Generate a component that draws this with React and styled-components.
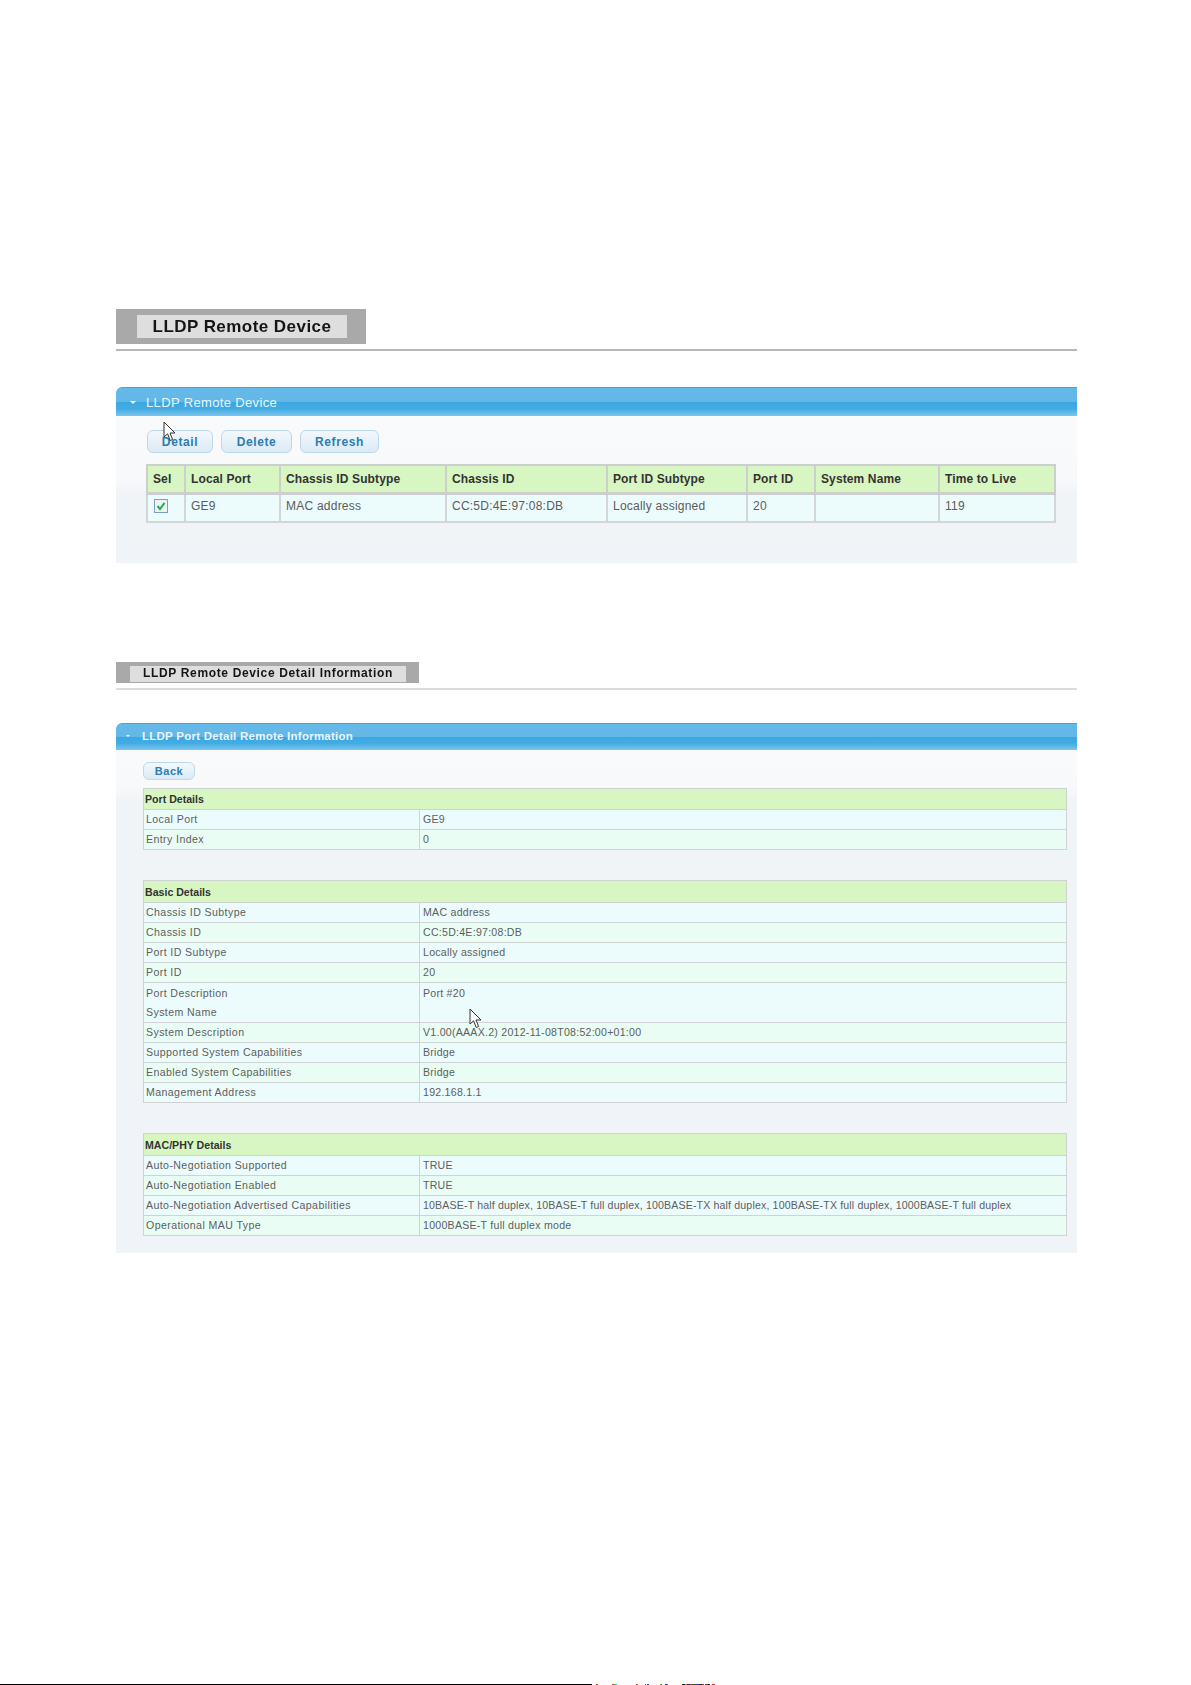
import React from "react";
import styled, { createGlobalStyle } from "styled-components";

const Global = createGlobalStyle`
  html, body { margin: 0; padding: 0; background: #fff; }
  body { font-family: "Liberation Sans", Arial, sans-serif; }
`;

const Page = styled.div`
  width: 1191px;
  height: 1685px;
  box-sizing: border-box;
  padding-top: 309px;
  display: flex;
  flex-direction: column;
  overflow: hidden;
`;
const Content = styled.main`
  width: 961px;
  margin-left: 116px;
  filter: blur(0.45px);
`;
const Banner = styled.div`
  box-sizing: border-box;
  width: ${(p) => p.$w}px;
  height: ${(p) => p.$h}px;
  padding: ${(p) => p.$pt}px ${(p) => p.$pr}px ${(p) => p.$pb}px ${(p) => p.$pl}px;
  margin-top: ${(p) => p.$mt || 0}px;
  background: #a9a9a9;
`;
const BannerInner = styled.h1`
  box-sizing: border-box;
  margin: 0;
  height: 100%;
  padding-bottom: ${(p) => p.$lift || 0}px;
  background: #dedede;
  display: flex;
  align-items: center;
  justify-content: center;
  font-size: ${(p) => p.$size}px;
  letter-spacing: ${(p) => p.$ls}px;
  font-weight: 700;
  color: #151515;
  white-space: nowrap;
`;
const Rule = styled.hr`
  margin: ${(p) => p.$mt}px 0 0;
  border: 0;
  height: ${(p) => p.$h}px;
  background: ${(p) => p.$c};
`;
const Panel = styled.section`
  position: relative;
  margin-top: ${(p) => p.$mt}px;
  height: ${(p) => p.$h}px;
  border-radius: 6px 0 0 0;
  overflow: hidden;
  display: flex;
  flex-direction: column;
`;
const PanelHead = styled.header`
  flex: none;
  box-sizing: border-box;
  height: ${(p) => p.$h}px;
  padding-left: ${(p) => p.$pl}px;
  padding-bottom: ${(p) => p.$lift || 0}px;
  display: flex;
  align-items: center;
  gap: ${(p) => p.$gap}px;
  color: #e9f5fc;
  font-size: ${(p) => p.$size}px;
  letter-spacing: ${(p) => p.$ls}px;
  font-weight: ${(p) => p.$weight};
  border-top: 1px solid #3fa6e2;
  background: linear-gradient(#64b9e9 0, #63b8e8 48%, #3aa7e1 52%, #45ace3 75%, #7ac6ee 100%);
`;
const Caret = styled.span`
  flex: none;
  width: 0;
  height: 0;
  border-left: ${(p) => p.$s}px solid transparent;
  border-right: ${(p) => p.$s}px solid transparent;
  border-top: ${(p) => p.$s - 0.5}px solid #f2f9fd;
`;
const PanelBody = styled.div`
  flex: 1;
  box-sizing: border-box;
  padding: ${(p) => p.$pt}px 0 0 ${(p) => p.$pl}px;
  background: linear-gradient(#f9fafc 0, #f8f9fb ${(p) => p.$fade}px, #f1f4f7 ${(p) => p.$fade + 14}px, #f0f3f7 100%);
`;
const ButtonRow = styled.div`
  display: flex;
  gap: 8px;
  height: ${(p) => p.$h}px;
`;
const Button = styled.button`
  box-sizing: border-box;
  width: ${(p) => p.$w}px;
  height: 100%;
  padding: 0;
  margin-left: ${(p) => p.$ml || 0}px;
  border: 1px solid #bcd8ec;
  border-radius: 6px;
  background: linear-gradient(#f3f8fc, #dbeaf6);
  color: #2b7eb0;
  font-family: inherit;
  font-weight: 700;
  font-size: ${(p) => p.$size}px;
  letter-spacing: 0.6px;
`;
const RemoteTable = styled.table`
  margin-top: 11px;
  width: 908px;
  table-layout: fixed;
  border-collapse: collapse;
  font-size: 12px;
`;
const HeadCell = styled.th`
  height: 26px;
  padding: 0 0 0 5px;
  text-align: left;
  background: #d7f6c2;
  color: #333;
  font-weight: 700;
  letter-spacing: 0.12px;
  border: 2px solid #cdcfcf;
  border-bottom-width: 3px;
`;
const BodyCell = styled.td`
  height: 28px;
  padding: 0 0 4px 5px;
  box-sizing: border-box;
  background: #ecfbfc;
  color: #5c5c5c;
  letter-spacing: 0.23px;
  border: 2px solid #d3d6d6;
`;
const Check = styled.span`
  display: flex;
  align-items: center;
  justify-content: center;
  box-sizing: border-box;
  width: 14px;
  height: 14px;
  margin-left: 1px;
  border: 1.5px solid #7f9fc0;
  background: #eef4f6;
`;
const DetailTable = styled.table`
  margin-top: ${(p) => p.$mt}px;
  width: 923px;
  table-layout: fixed;
  border-collapse: collapse;
  font-size: 10.6px;
`;
const SectionCell = styled.th`
  height: ${(p) => p.$h}px;
  padding: 0 0 0 1px;
  text-align: left;
  background: #d7f6c2;
  color: #333;
  font-weight: 700;
  letter-spacing: 0;
  border: 1.5px solid #cfd2d2;
`;
const DetailCell = styled.td`
  height: ${(p) => (p.$tall ? 39 : 19)}px;
  padding: 0 0 0 ${(p) => p.$pl}px;
  line-height: 19px;
  letter-spacing: ${(p) => p.$ls}px;
  background: ${(p) => (p.$odd ? "#e9fdf4" : "#ecfbfc")};
  color: #5e5e5e;
  border: 1.5px solid #d0d3d3;
  white-space: nowrap;
`;
const Cursor = styled.svg`
  position: absolute;
  left: ${(p) => p.$x}px;
  top: ${(p) => p.$y}px;
`;
const Footer = styled.footer`
  margin-top: auto;
  display: flex;
  height: 1px;
`;
const FooterLine = styled.div`
  width: 592px;
  height: 1px;
  background: #000;
`;
const FooterSpecks = styled.svg`
  display: block;
`;

const Arrow = ({ x, y, w = 13, h = 21 }) => (
  <Cursor $x={x} $y={y} width={w} height={h} viewBox="0 0 13 21">
    <path d="M1 1 L1 16 L4.6 12.8 L7.2 19.5 L9.6 18.5 L7 12 L12 12 Z" fill="#fff" stroke="#333" strokeWidth="1" strokeLinejoin="round" />
  </Cursor>
);

const columns = [
  ["Sel", 38], ["Local Port", 95], ["Chassis ID Subtype", 166], ["Chassis ID", 161],
  ["Port ID Subtype", 140], ["Port ID", 68], ["System Name", 124], ["Time to Live", 116],
];
const remote = ["GE9", "MAC address", "CC:5D:4E:97:08:DB", "Locally assigned", "20", "", "119"];

const sections = [
  { title: "Port Details", mt: 8, head: 20, rows: [["Local Port", "GE9"], ["Entry Index", "0"]] },
  {
    title: "Basic Details", mt: 30, head: 21, rows: [
      ["Chassis ID Subtype", "MAC address"],
      ["Chassis ID", "CC:5D:4E:97:08:DB"],
      ["Port ID Subtype", "Locally assigned"],
      ["Port ID", "20"],
      ["Port Description", "Port #20", "System Name"],
      ["System Description", "V1.00(AAAX.2) 2012-11-08T08:52:00+01:00"],
      ["Supported System Capabilities", "Bridge"],
      ["Enabled System Capabilities", "Bridge"],
      ["Management Address", "192.168.1.1"],
    ],
  },
  {
    title: "MAC/PHY Details", mt: 30, head: 21, rows: [
      ["Auto-Negotiation Supported", "TRUE"],
      ["Auto-Negotiation Enabled", "TRUE"],
      ["Auto-Negotiation Advertised Capabilities", "10BASE-T half duplex, 10BASE-T full duplex, 100BASE-TX half duplex, 100BASE-TX full duplex, 1000BASE-T full duplex"],
      ["Operational MAU Type", "1000BASE-T full duplex mode"],
    ],
  },
];

const specks = [
  [4, 1, "#c33"], [5, 1, "#39c"], [20, 2, "#d33"], [22, 1, "#3c3"], [23, 2, "#3cc"],
  [44, 1, "#c33"], [45, 1, "#3c9"], [53, 1, "#c33"], [55, 2, "#33c"], [68, 1, "#3c3"], [69, 1, "#c33"],
  [73, 2, "#33c"], [75, 1, "#c33"], [90, 3, "#222"], [93, 2, "#c83"], [95, 3, "#226"], [98, 2, "#c33"],
  [100, 3, "#262"], [103, 4, "#33c"], [107, 3, "#222"], [110, 2, "#c33"], [113, 3, "#262"], [116, 2, "#222"], [120, 3, "#c33"],
];

export default function App() {
  return (
    <Page>
      <Global />
      <Content>
        <Banner $w={250} $h={35} $pt={6} $pb={6} $pl={21} $pr={19}>
          <BannerInner $size={17} $ls={0.45}>LLDP Remote Device</BannerInner>
        </Banner>
        <Rule $mt={5} $h={2} $c="#b8b8b8" />
        <Panel $mt={36} $h={176}>
          <PanelHead $h={29} $pl={14} $gap={10} $size={13} $ls={0.35} $weight={400}>
            <Caret $s={3.5} />
            LLDP Remote Device
          </PanelHead>
          <PanelBody $pt={14} $pl={30} $fade={62}>
            <ButtonRow $h={23}>
              <Button $w={66} $ml={1} $size={12}>Detail</Button>
              <Button $w={71} $size={12}>Delete</Button>
              <Button $w={79} $size={12}>Refresh</Button>
            </ButtonRow>
            <RemoteTable>
              <colgroup>
                {columns.map(([name, w]) => <col key={name} width={w} />)}
              </colgroup>
              <thead>
                <tr>{columns.map(([name]) => <HeadCell key={name}>{name}</HeadCell>)}</tr>
              </thead>
              <tbody>
                <tr>
                  <BodyCell>
                    <Check>
                      <svg width="10" height="10" viewBox="0 0 10 10">
                        <path d="M1.5 5 L4 8 L8.5 1.8" fill="none" stroke="#25b04a" strokeWidth="2" />
                      </svg>
                    </Check>
                  </BodyCell>
                  {remote.map((v, i) => <BodyCell key={i}>{v}</BodyCell>)}
                </tr>
              </tbody>
            </RemoteTable>
          </PanelBody>
          <Arrow x={47} y={34} />
        </Panel>

        <Banner $w={303} $h={21} $pt={4} $pb={1} $pl={14} $pr={13} $mt={99}>
          <BannerInner $size={12} $ls={0.65} $lift={2}>LLDP Remote Device Detail Information</BannerInner>
        </Banner>
        <Rule $mt={5} $h={2} $c="#dcdcdc" />
        <Panel $mt={33} $h={530}>
          <PanelHead $h={27} $pl={10} $gap={12} $size={11.5} $ls={0.25} $weight={700} $lift={2}>
            <Caret $s={2.5} />
            LLDP Port Detail Remote Information
          </PanelHead>
          <PanelBody $pt={12} $pl={27} $fade={36}>
            <ButtonRow $h={18}>
              <Button $w={52} $size={11}>Back</Button>
            </ButtonRow>
            {sections.map((s) => (
              <DetailTable key={s.title} $mt={s.mt}>
                <colgroup>
                  <col width={276} />
                  <col width={647} />
                </colgroup>
                <thead>
                  <tr><SectionCell colSpan={2} $h={s.head}>{s.title}</SectionCell></tr>
                </thead>
                <tbody>
                  {s.rows.map(([k, v, extra], i) => (
                    <tr key={k}>
                      <DetailCell $pl={2} $ls={0.4} $odd={i % 2 === 1} $tall={!!extra}>{k}{extra && <><br />{extra}</>}</DetailCell>
                      <DetailCell $pl={3} $ls={v.length > 60 ? 0.15 : 0.25} $odd={i % 2 === 1} $tall={!!extra}>{v}{extra && <><br />&nbsp;</>}</DetailCell>
                    </tr>
                  ))}
                </tbody>
              </DetailTable>
            ))}
          </PanelBody>
          <Arrow x={353} y={285} />
        </Panel>
      </Content>
      <Footer>
        <FooterLine />
        <FooterSpecks width="125" height="1">
          {specks.map(([x, w, c]) => <rect key={x} x={x} y={0} width={w} height={1} fill={c} />)}
        </FooterSpecks>
      </Footer>
    </Page>
  );
}
